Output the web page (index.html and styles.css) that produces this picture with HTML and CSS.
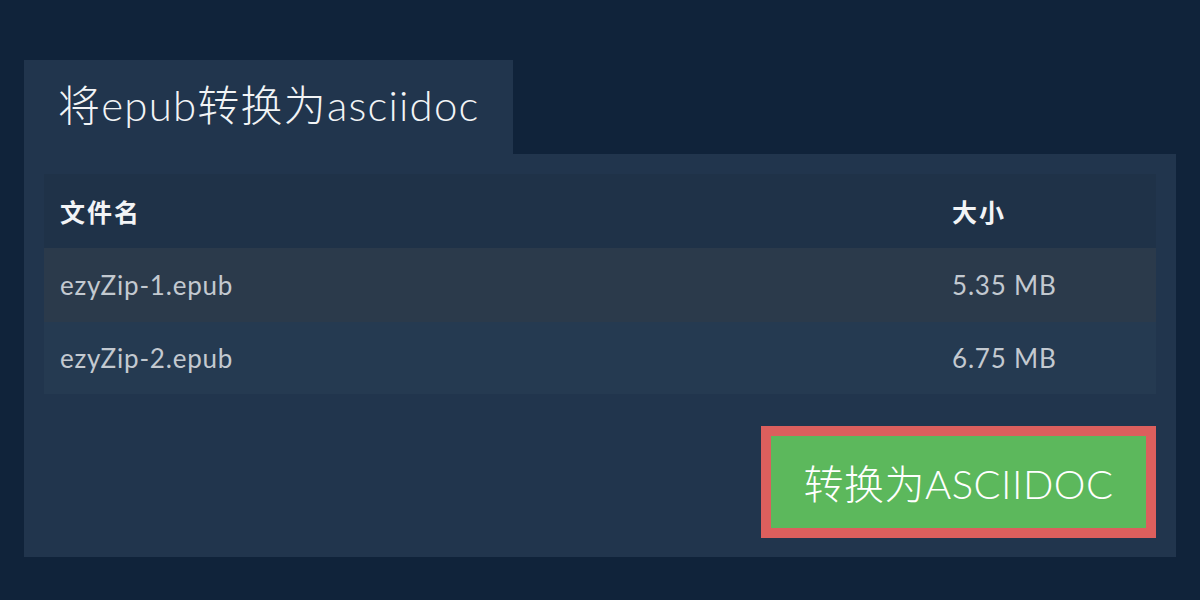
FILE: index.html
```html
<!DOCTYPE html>
<html lang="zh">
<head>
<meta charset="utf-8">
<link rel="stylesheet" href="styles.css">
</head>
<body>
<div class="wrap">
  <div class="tab"><h1 class="title">将epub转换为asciidoc</h1></div>
  <div class="panel">
    <div class="table">
      <div class="row head"><div class="cell">文件名</div><div class="cell">大小</div></div>
      <div class="row odd"><div class="cell">ezyZip-1.epub</div><div class="cell">5.35 MB</div></div>
      <div class="row even"><div class="cell">ezyZip-2.epub</div><div class="cell">6.75 MB</div></div>
    </div>
    <div class="actions">
      <button class="convert">转换为ASCIIDOC</button>
    </div>
  </div>
</div>
</body>
</html>
```
FILE: styles.css
```css
html, body {
  margin: 0;
  padding: 0;
  background: #10233a;
}
body {
  font-family: Lato, "Noto Sans CJK SC", sans-serif;
  color: #c3c9d0;
}
.wrap {
  padding: 60px 24px 0 24px;
  width: 1152px;
}
.tab {
  width: 489px;
  height: 94px;
  background: #21354d;
  display: flex;
  align-items: center;
  box-sizing: border-box;
  padding-left: 34px;
}
.title {
  margin: 0;
  font-family: Lato, "Noto Sans CJK SC", sans-serif;
  font-size: 42px;
  font-weight: 300;
  letter-spacing: 1.2px;
  color: #f2f4f6;
  line-height: 1;
  position: relative;
  top: -2px;
}
.panel {
  background: #21354d;
  padding: 20px 20px 19px 20px;
}
.table {
  display: flex;
  flex-direction: column;
}
.row {
  display: grid;
  grid-template-columns: 1fr 220px;
  height: 74px;
  align-items: center;
}
.row.head { background: #1f3248; }
.row.odd { background: #2b3a4b; }
.row.even { background: #253a51; height: 72px; }
.cell {
  padding-left: 16px;
  font-size: 26px;
  letter-spacing: 0.8px;
}
.head .cell {
  font-weight: 700;
  color: #f2f4f6;
  font-size: 25px;
  letter-spacing: 2px;
}
.actions {
  display: flex;
  justify-content: flex-end;
  padding-top: 32px;
}
.convert {
  background: #5cb85c;
  border: 10px solid #dc5f5d;
  color: #ffffff;
  font-family: Lato, "Noto Sans CJK SC", sans-serif;
  font-size: 40px;
  font-weight: 300;
  letter-spacing: 0.5px;
  width: 395px;
  height: 112px;
  padding: 0;
  margin: 0;
  cursor: pointer;
}
```
